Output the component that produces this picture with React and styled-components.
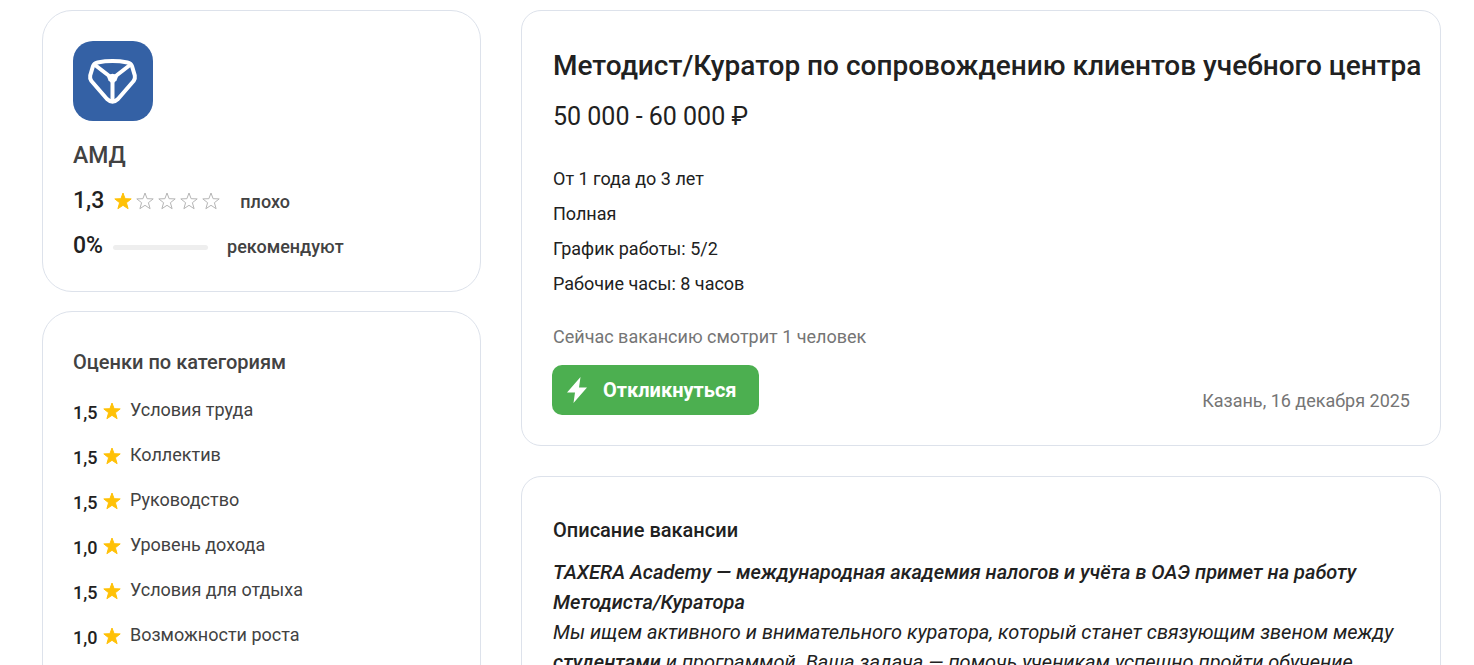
import React from 'react';
import styled, { createGlobalStyle } from 'styled-components';

const categories = [
    { score: '1,5', label: 'Условия труда' },
    { score: '1,5', label: 'Коллектив' },
    { score: '1,5', label: 'Руководство' },
    { score: '1,0', label: 'Уровень дохода' },
    { score: '1,5', label: 'Условия для отдыха' },
    { score: '1,0', label: 'Возможности роста' },
];

const conditions = [
    'От 1 года до 3 лет',
    'Полная',
    'График работы: 5/2',
    'Рабочие часы: 8 часов',
];

const rating = 1;
const recommend = 0;

function Star({ filled }) {
    return (
        <StarIcon viewBox="0 0 18 18" $filled={filled} aria-hidden="true">
            <path d="M9 1L11.1 6.7L17.2 6.9L12.4 10.7L14.1 16.7L9 13.3L3.9 16.7L5.6 10.7L.8 6.9L6.9 6.7Z" />
        </StarIcon>
    );
}

function CompanyLogo() {
    return (
        <Logo viewBox="0 0 80 80" role="img" aria-label="АМД">
            <rect width="80" height="80" rx="20" fill="#3461a5" />
            <g fill="none" stroke="#fff" strokeWidth="4" strokeLinecap="round" strokeLinejoin="round">
                <path d="M24.500 21.500Q39.500 18.600 54.500 21.500Q58 22.200 59 25.200L61.800 34.500Q62.400 37.400 60.600 40L45 58Q39.500 63.200 34 58L18.400 40Q16.600 37.400 17.200 34.500L20 25.200Q21 22.200 24.500 21.500Z" />
                <path d="M22 24L39.500 37.500L57 24M39.500 37.500V60" />
            </g>
            <path d="M34 35.500Q39.500 30 45 35.500L43.500 39.500L39.500 43L35.500 39.500Z" fill="#fff" />
        </Logo>
    );
}

export default function App() {
    return (
        <>
            <GlobalStyle />
            <Page>
                <Sidebar>
                    <SideCard>
                        <CompanyLogo />
                        <CompanyName>АМД</CompanyName>
                        <RatingRow>
                            <BigValue>1,3</BigValue>
                            <Stars>
                                {[1, 2, 3, 4, 5].map((n) => (
                                    <Star key={n} filled={n <= rating} />
                                ))}
                            </Stars>
                            <RatingText>плохо</RatingText>
                        </RatingRow>
                        <RatingRow>
                            <BigValue>0%</BigValue>
                            <Track>
                                <TrackFill style={{ width: `${recommend}%` }} />
                            </Track>
                            <RatingText>рекомендуют</RatingText>
                        </RatingRow>
                    </SideCard>
                    <SideCard>
                        <SideTitle>Оценки по категориям</SideTitle>
                        <CategoryList>
                            {categories.map((item) => (
                                <CategoryRow key={item.label}>
                                    <CategoryScore>{item.score}</CategoryScore>
                                    <Star filled />
                                    <CategoryLabel>{item.label}</CategoryLabel>
                                </CategoryRow>
                            ))}
                        </CategoryList>
                    </SideCard>
                </Sidebar>
                <Main>
                    <Card>
                        <Title>Методист/Куратор по сопровождению клиентов учебного центра</Title>
                        <Salary>50 000 - 60 000 ₽</Salary>
                        <Conditions>
                            {conditions.map((text) => (
                                <li key={text}>{text}</li>
                            ))}
                        </Conditions>
                        <Watching>Сейчас вакансию смотрит 1 человек</Watching>
                        <CardFooter>
                            <ApplyButton type="button">
                                <svg width="20" height="26" viewBox="0 0 20 26" aria-hidden="true">
                                    <path d="M13.500 0L0 15.500H8L6.500 26L20 10.500H12Z" fill="#fff" />
                                </svg>
                                Откликнуться
                            </ApplyButton>
                            <Place>Казань, 16 декабря 2025</Place>
                        </CardFooter>
                    </Card>
                    <Card>
                        <SectionTitle>Описание вакансии</SectionTitle>
                        <Description>
                            <strong>TAXERA Academy — международная академия налогов и учёта в ОАЭ примет на работу Методиста/Куратора</strong>
                            <br />
                            Мы ищем активного и внимательного куратора, который станет связующим звеном между <strong>студентами</strong> и программой. Ваша задача — помочь ученикам успешно пройти обучение
                        </Description>
                    </Card>
                </Main>
            </Page>
        </>
    );
}

const GlobalStyle = createGlobalStyle`
* {
    box-sizing: border-box;
}
body {
    margin: 0;
    background: #fff;
    color: #212121;
    font-family: Roboto, "Liberation Sans", sans-serif;
    font-size: 18px;
    line-height: 24px;
}
h1, h2, p, ul {
    margin: 0;
    padding: 0;
    font-weight: 400;
}
ul {
    list-style: none;
}
`;

const Page = styled.div`
    display: grid;
    grid-template-columns: 439px minmax(0, 1fr);
    gap: 40px;
    align-items: start;
    height: 100vh;
    overflow: hidden;
    padding: 10px 33px 0 42px;
`;

const Sidebar = styled.aside`
    display: flex;
    flex-direction: column;
    gap: 19px;
`;

const Main = styled.main`
    display: flex;
    flex-direction: column;
    gap: 30px;
`;

const Card = styled.section`
    padding: 30px;
    padding-left: 31px;
    border: 1px solid #dde2eb;
    border-radius: 20px;
    background: #fff;
`;

const SideCard = styled(Card)`
    padding-left: 30px;
    border-radius: 30px;
`;

const Logo = styled.svg`
    display: block;
    width: 80px;
    height: 80px;
`;

const CompanyName = styled.h2`
    margin-top: 19px;
    color: #424242;
    font-size: 23px;
    font-weight: 500;
    line-height: 32px;
`;

const RatingRow = styled.div`
    display: flex;
    align-items: center;
    height: 28px;
    margin-top: 16px;

    & + & {
        margin-top: 17px;
    }
`;

const BigValue = styled.span`
    min-width: 30px;
    margin-right: 10px;
    padding-bottom: 2px;
    font-size: 23px;
    font-weight: 500;
    line-height: 28px;
`;

const Stars = styled.div`
    display: flex;
    gap: 4px;
    margin-right: 20px;
    padding-bottom: 2px;
`;

const StarIcon = styled.svg`
    flex: none;
    width: 18px;
    height: 18px;
    fill: ${(props) => (props.$filled ? '#ffc107' : 'none')};
    stroke: ${(props) => (props.$filled ? '#ffc107' : '#b5b5b5')};
    stroke-width: 1;
`;

const RatingText = styled.span`
    color: #424242;
    font-weight: 500;
`;

const Track = styled.div`
    width: 95px;
    height: 5px;
    margin-right: 19px;
    border-radius: 3px;
    background: #eee;
    overflow: hidden;
`;

const TrackFill = styled.div`
    height: 100%;
    background: #ffc107;
`;

const SideTitle = styled.h2`
    margin-top: 4px;
    color: #424242;
    font-size: 20px;
    font-weight: 500;
    line-height: 32px;
`;

const CategoryList = styled.ul`
    margin-top: 15px;
`;

const CategoryRow = styled.li`
    display: flex;
    align-items: center;
    height: 36px;
    margin-bottom: 9px;
`;

const CategoryScore = styled.span`
    width: 30px;
    padding-top: 3px;
    font-weight: 500;
`;

const CategoryLabel = styled.span`
    margin-left: 9px;
    padding-bottom: 3px;
    color: #424242;
`;

const Title = styled.h1`
    margin-top: 8px;
    margin-right: -20px;
    font-size: 28px;
    font-weight: 500;
    line-height: 34px;
`;

const Salary = styled.p`
    margin-top: 17px;
    font-size: 25px;
    line-height: 34px;
`;

const Conditions = styled.ul`
    margin-top: 27px;
    line-height: 35px;
`;

const Watching = styled.p`
    margin-top: 24px;
    color: #757575;
`;

const CardFooter = styled.div`
    display: flex;
    align-items: flex-end;
    justify-content: space-between;
    margin-top: 16px;
    margin-left: -1px;
`;

const ApplyButton = styled.button`
    display: flex;
    align-items: center;
    gap: 16px;
    height: 50px;
    padding: 0 22px 0 15px;
    border: 0;
    border-radius: 10px;
    background: #4caf50;
    color: #fff;
    font: 700 20px Roboto, "Liberation Sans", sans-serif;
    cursor: pointer;
`;

const Place = styled.span`
    padding-bottom: 2px;
    color: #757575;
`;

const SectionTitle = styled.h2`
    margin-top: 8px;
    font-size: 20px;
    font-weight: 500;
    line-height: 30px;
`;

const Description = styled.p`
    margin-top: 12px;
    font-size: 20px;
    font-style: italic;
    line-height: 30px;

    strong {
        font-weight: 500;
    }
`;
